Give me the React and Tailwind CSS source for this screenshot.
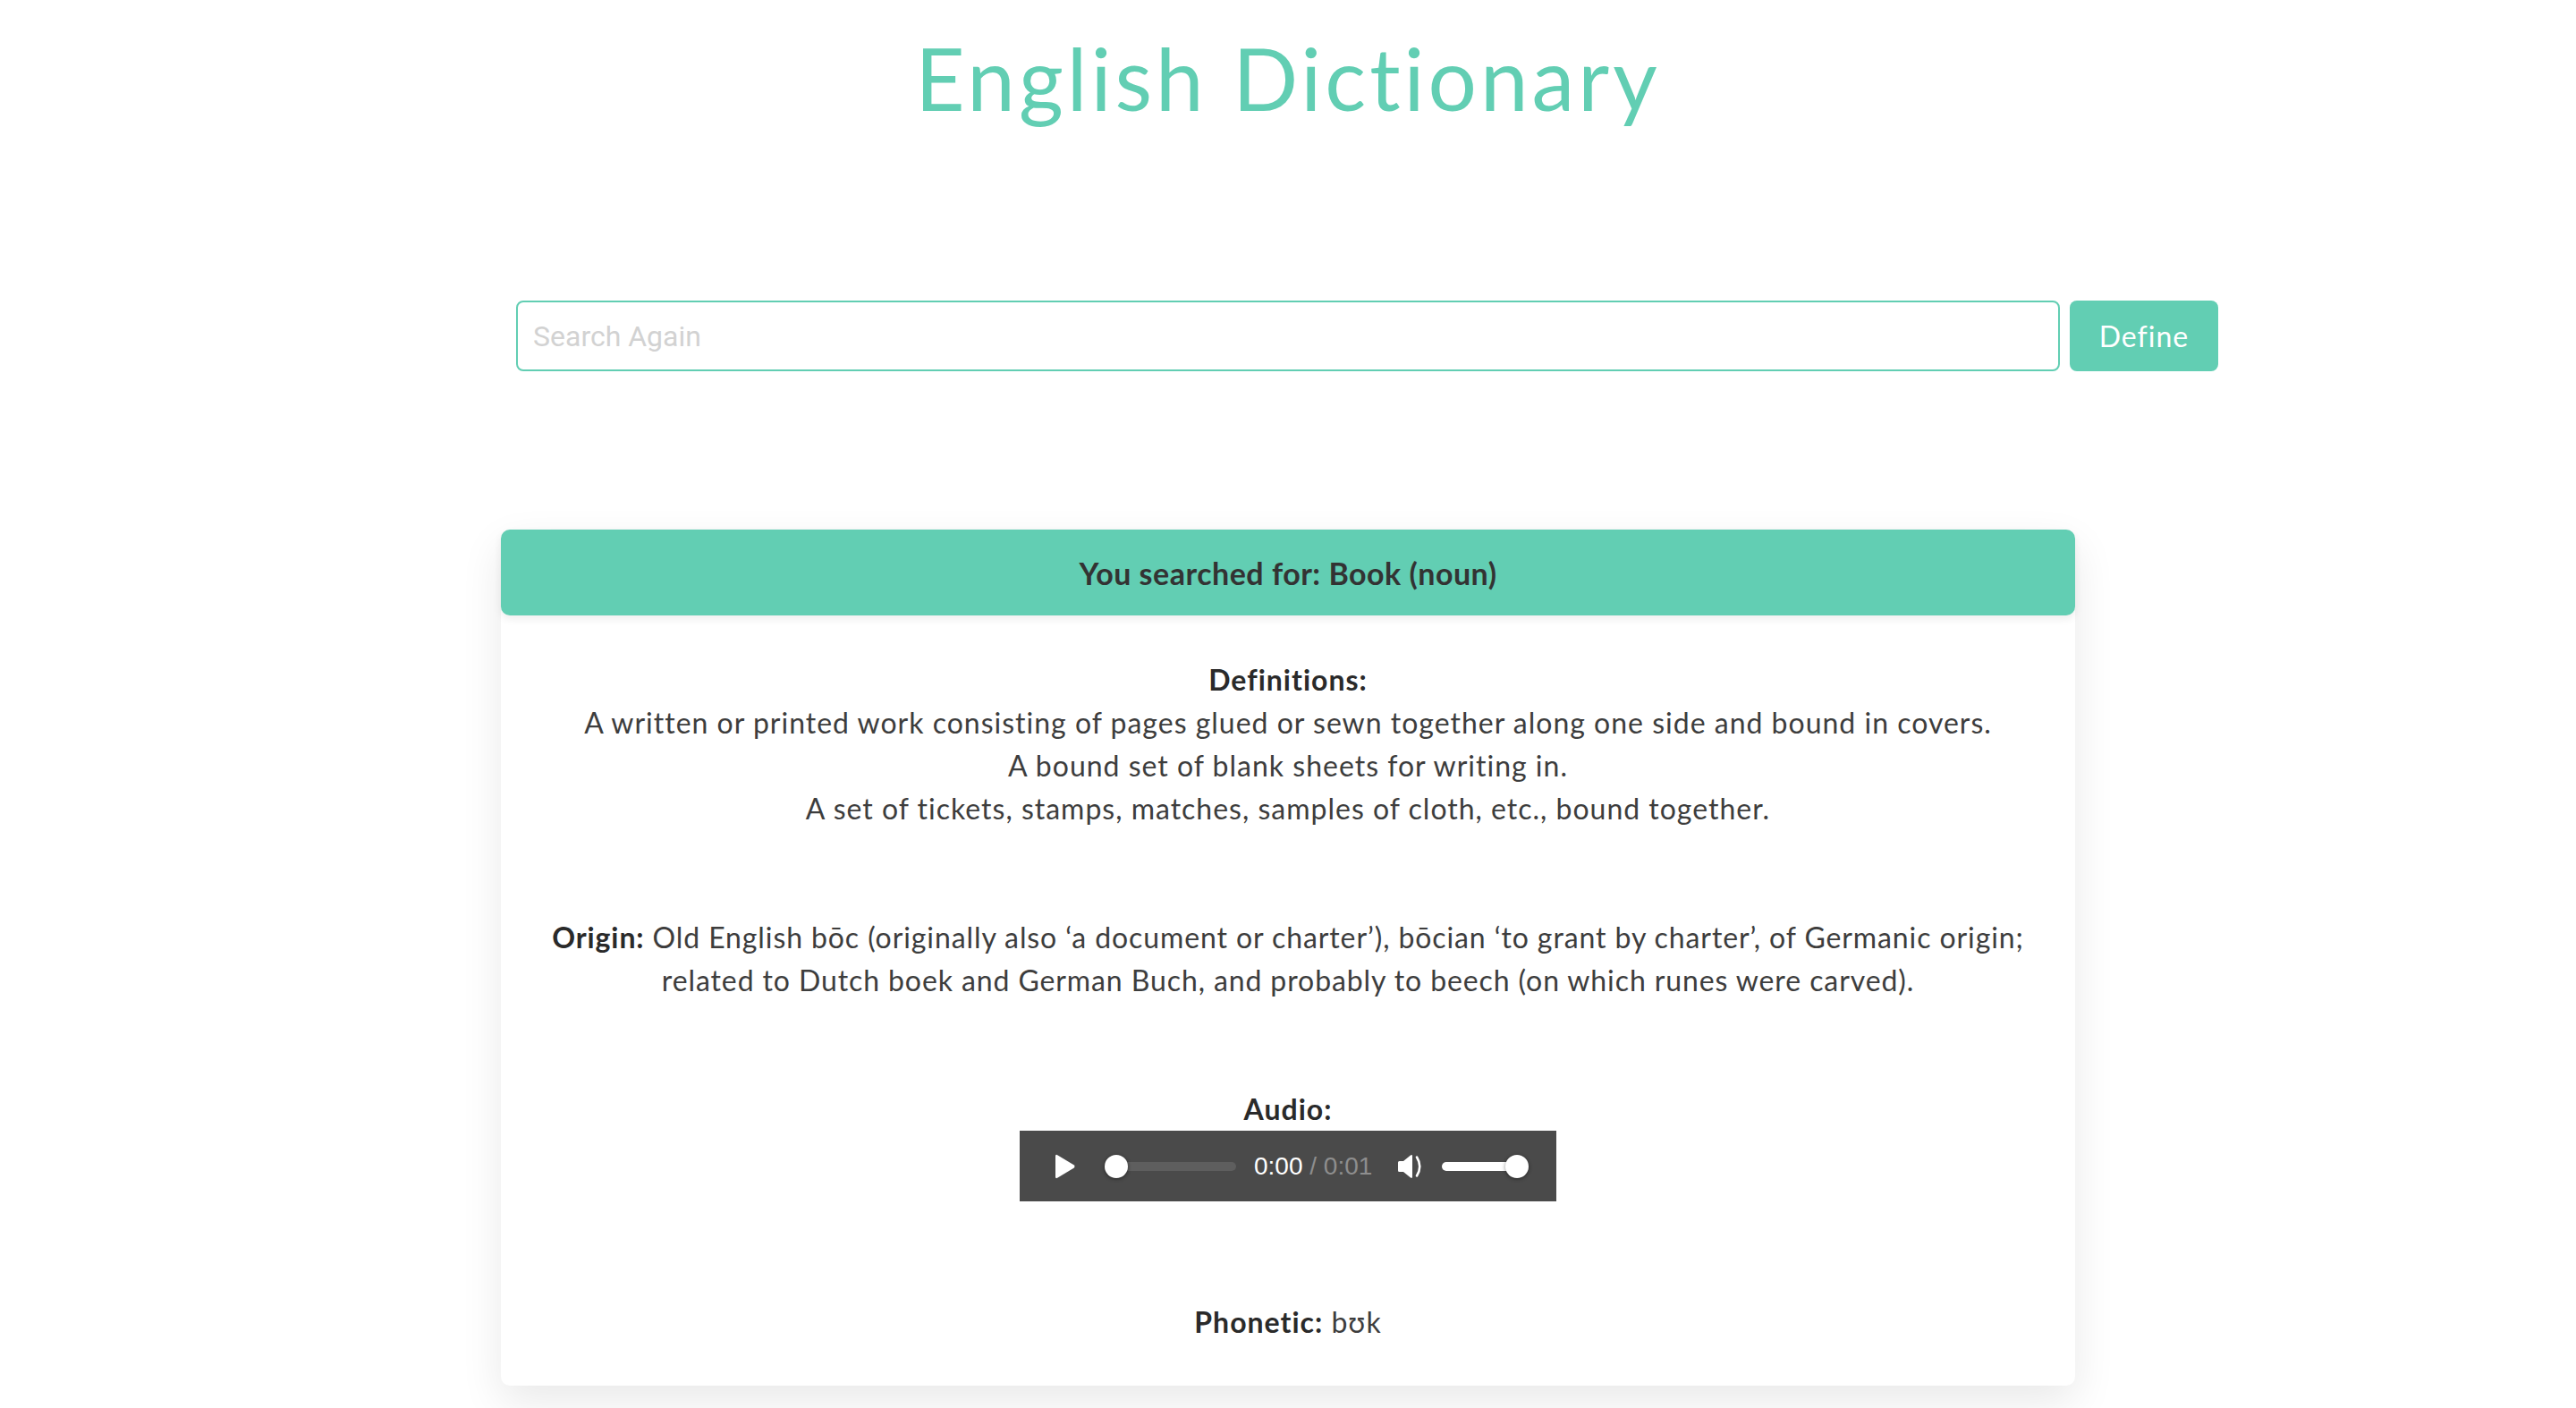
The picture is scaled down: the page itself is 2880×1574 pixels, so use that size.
import React from 'react';

const teal = 'bg-[#62ceb3]';

const PlayIcon = () => (
  <svg width="26" height="30" viewBox="0 0 26 30" className="shrink-0">
    <path d="M3 3.5 Q3 1 5.2 2.2 L23.5 13.2 Q25.5 15 23.5 16.8 L5.2 27.8 Q3 29 3 26.5 Z" fill="#fff" />
  </svg>
);

const VolumeIcon = () => (
  <svg width="34" height="30" viewBox="0 0 34 30" className="shrink-0">
    <path d="M2 10.5 Q2 9 3.5 9 H8 L16 2.5 Q18 1.2 18 3.5 V26.5 Q18 28.8 16 27.5 L8 21 H3.5 Q2 21 2 19.5 Z" fill="#fff" />
    <path d="M23 4.5 Q29.5 15 23 25.5" stroke="#fff" strokeWidth="2.6" fill="none" strokeLinecap="round" />
  </svg>
);

const Knob = () => (
  <div className="w-[26px] h-[26px] rounded-full bg-white shadow-[0_1px_4px_rgba(0,0,0,0.45)] shrink-0" />
);

const AudioPlayer = () => (
  <div className="mx-auto w-[600px] h-[79px] bg-[#4a4a4a] flex items-center pl-[37px] pr-[30px] tracking-normal">
    <PlayIcon />
    {/* progress */}
    <div className="ml-[32px] w-[147px] shrink-0 relative flex items-center">
      <div className="w-full h-[10px] rounded-full bg-[#5e5e5e]" />
      <div className="absolute left-0">
        <Knob />
      </div>
    </div>
    <div className="ml-[20px] whitespace-nowrap text-[28px] leading-none text-white" style={{ fontFamily: '"Liberation Sans", Arial, sans-serif' }}>
      0:00<span className="text-[#8e8e8e]"> / 0:01</span>
    </div>
    <div className="ml-[27px]">
      <VolumeIcon />
    </div>
    {/* volume */}
    <div className="ml-[17px] flex items-center">
      <div className="w-[79px] h-[10px] rounded-l-full bg-white -mr-[8px]" />
      <Knob />
    </div>
  </div>
);

export default function App() {
  return (
    <div className="min-h-screen bg-white" style={{ fontFamily: 'Lato, "Open Sans", sans-serif' }}>
      <h1 className="pt-[29px] text-center text-[96px] leading-[115px] font-normal tracking-[4px] text-[#62ceb3]">
        English Dictionary
      </h1>

      {/* Search */}
      <div className="mt-[192px] grid grid-cols-[1fr_1726px_1fr]">
        <div />
        <input
          type="text"
          placeholder="Search Again"
          className="h-[79px] w-full rounded-[8px] border-2 border-[#62ceb3] px-[17px] text-[32px] outline-none placeholder:text-[#d2d2d2]"
          style={{ fontFamily: 'Roboto, sans-serif' }}
        />
        <div>
          <button className={`ml-[11px] h-[79px] w-[166px] rounded-[8px] ${teal} text-white text-[32px] tracking-[1px]`}>
            Define
          </button>
        </div>
      </div>

      {/* Result card */}
      <div className="mx-auto mt-[177px] w-[1760px] rounded-[10px] bg-white shadow-[0_18px_48px_rgba(0,0,0,0.09)]">
        <div className={`h-[96px] rounded-[10px] ${teal} flex items-center justify-center shadow-[0_4px_10px_rgba(0,0,0,0.07)]`}>
          <span className="text-[34px] font-bold tracking-[0.5px] text-[#333]">You searched for: Book (noun)</span>
        </div>

        <div className="pt-[48px] pb-[47px] text-center text-[32px] leading-[48px] tracking-[1px] text-[#3d3d3d]">
          <div>
            <div className="font-bold text-[#2a2a2a]">Definitions:</div>
            <div>A written or printed work consisting of pages glued or sewn together along one side and bound in covers.</div>
            <div>A bound set of blank sheets for writing in.</div>
            <div>A set of tickets, stamps, matches, samples of cloth, etc., bound together.</div>
          </div>

          <div className="mt-[96px] tracking-[0.9px]">
            <span className="font-bold text-[#2a2a2a]">Origin:</span> Old English bōc (originally also ‘a document or charter’), bōcian ‘to grant by charter’, of Germanic origin;
            <br />
            related to Dutch boek and German Buch, and probably to beech (on which runes were carved).
          </div>

          <div className="mt-[96px]">
            <div className="font-bold text-[#2a2a2a]">Audio:</div>
            <AudioPlayer />
          </div>

          <div className="mt-[111px]">
            <span className="font-bold text-[#2a2a2a]">Phonetic:</span> bʊk
          </div>
        </div>
      </div>
    </div>
  );
}
